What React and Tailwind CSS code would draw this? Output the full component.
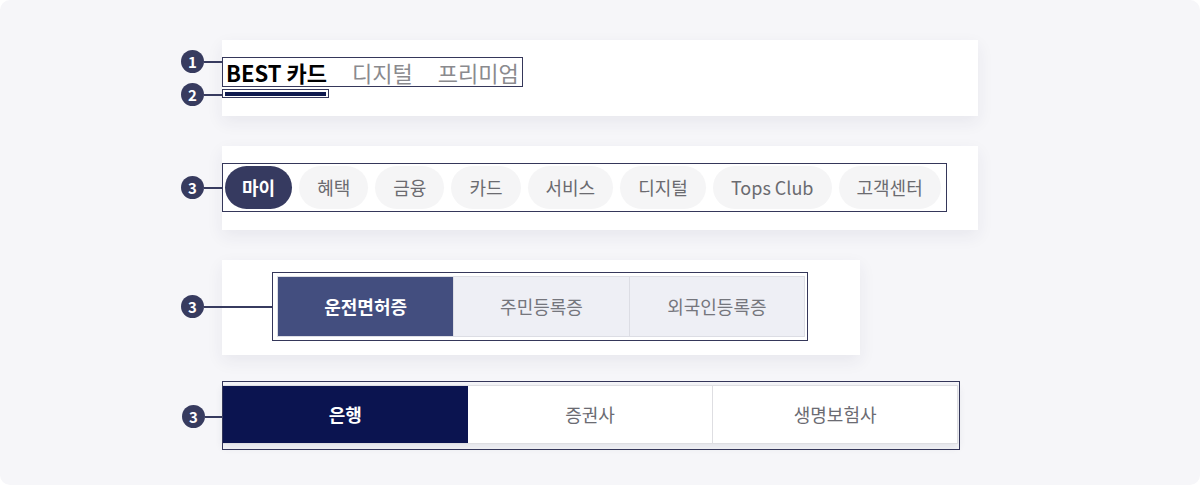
import React from "react";

const FONT = { fontFamily: '"Noto Sans CJK KR", "Noto Sans", sans-serif' };

// 번호 마커 + 연결선 (주석용 오버레이)
function Marker({ n, top, line }) {
  return (
    <div className="absolute left-[-41px] flex items-center" style={{ top }}>
      <div className="w-[23px] h-[23px] rounded-full bg-[#373b5f] text-white text-[15px] font-bold flex items-center justify-center leading-none">
        {n}
      </div>
      <div className="h-[2px] bg-[#373b5f]" style={{ width: line }} />
    </div>
  );
}

const pills = ["마이", "혜택", "금융", "카드", "서비스", "디지털", "Tops Club", "고객센터"];

export default function App() {
  return (
    <div className="w-[1200px] h-[485px] bg-white" style={FONT}>
      <div className="h-full rounded-[10px] bg-[#f6f6f9] pl-[222px] pt-[40px] flex flex-col items-start">
        {/* 1. 텍스트 탭 */}
        <div className="relative w-[756px] h-[76px] bg-white shadow-[0_6px_16px_rgba(40,45,80,0.07)] pt-[17px]">
          <Marker n="1" top={10} line={18} />
          <Marker n="2" top={43} line={18} />
          <div className="inline-flex items-center gap-[25px] border border-[#35375a] px-[3px] h-[30px] text-[22px] leading-[28px]">
            <span className="font-bold text-black">BEST 카드</span>
            <span className="text-[#8a8a8e]">디지털</span>
            <span className="text-[#8a8a8e]">프리미엄</span>
          </div>
          <div className="mt-[2px] w-[107px] border border-[#35375a] px-[2px] pt-[2px] pb-[1px]">
            <div className="h-[4px] bg-[#0f1a4f]" />
          </div>
        </div>

        {/* 2. 라운드 탭 */}
        <div className="relative mt-[30px] w-[756px] h-[84px] bg-white shadow-[0_6px_16px_rgba(40,45,80,0.07)] pt-[17px]">
          <Marker n="3" top={30} line={18} />
          <div className="inline-flex items-center gap-[7px] border border-[#35375a] p-[2px] pr-[5px]">
            {pills.map((p, i) => (
              <div
                key={p}
                className={
                  i === 0
                    ? "h-[43px] px-[17px] rounded-full bg-[#363a60] text-white font-bold text-[18px] flex items-center"
                    : "h-[43px] px-[18px] rounded-full bg-[#f5f5f6] text-[#6b6b70] text-[18px] flex items-center"
                }
              >
                {p}
              </div>
            ))}
          </div>
        </div>

        {/* 3. 박스 탭 */}
        <div className="relative mt-[30px] w-[638px] h-[95px] bg-white shadow-[0_6px_16px_rgba(40,45,80,0.07)] pl-[50px] pt-[12px]">
          <Marker n="3" top={35} line={68} />
          <div className="w-[536px] border border-[#35375a] pt-[3px] pb-[3px] pl-[4px] pr-[2px]">
            <div className="grid grid-cols-3 h-[61px] border border-[#dcdde4] text-[18px]">
              <div className="bg-[#434e7f] text-white font-bold flex items-center justify-center">운전면허증</div>
              <div className="bg-[#eeeff5] text-[#75767d] border-l border-[#dcdde4] flex items-center justify-center">주민등록증</div>
              <div className="bg-[#eeeff5] text-[#75767d] border-l border-[#dcdde4] flex items-center justify-center">외국인등록증</div>
            </div>
          </div>
        </div>

        {/* 4. 와이드 탭 */}
        <div className="relative mt-[26px] w-[738px] h-[69px] border border-[#35375a] pt-[3px] pr-[1px] pb-[4px]">
          <Marker n="3" top={23} line={18} />
          <div className="grid grid-cols-3 h-[59px] bg-white border-y border-r border-[#dedee2] shadow-[0_3px_8px_rgba(40,45,80,0.1)] text-[18px]">
            <div className="bg-[#0b1450] text-white font-bold flex items-center justify-center">은행</div>
            <div className="text-[#6b6b72] flex items-center justify-center">증권사</div>
            <div className="text-[#6b6b72] border-l border-[#dedee2] flex items-center justify-center">생명보험사</div>
          </div>
        </div>
      </div>
    </div>
  );
}
